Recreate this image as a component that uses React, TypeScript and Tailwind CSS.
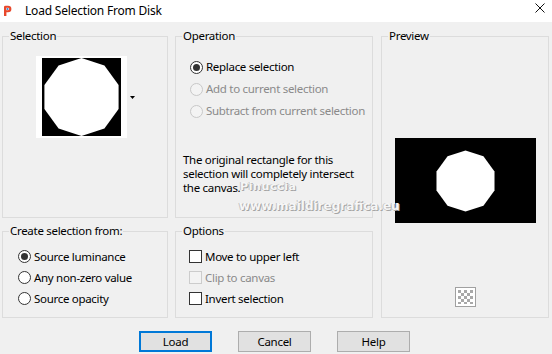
import React from "react";

function Decagon({ cx, cy, r }: { cx: number; cy: number; r: number }) {
  const pts: string[] = [];
  for (let i = 0; i < 10; i++) {
    const a = (Math.PI * 2 * i) / 10;
    pts.push(`${(cx + r * Math.sin(a)).toFixed(2)},${(cy - r * Math.cos(a)).toFixed(2)}`);
  }
  return <polygon points={pts.join(" ")} fill="#fff" />;
}

function Radio({ checked, disabled, label }: { checked?: boolean; disabled?: boolean; label: string }) {
  return (
    <div className="flex items-center gap-[3px]">
      <span
        className={
          disabled
            ? "w-[13px] h-[13px] rounded-full border border-[#c8c8c8] bg-[#f3f3f3] flex items-center justify-center"
            : "w-[13px] h-[13px] rounded-full border border-[#333] bg-white flex items-center justify-center"
        }
      >
        {checked && <span className="w-[7px] h-[7px] rounded-full bg-[#333]" />}
      </span>
      <span className={disabled ? "text-[#8a8a8a]" : "text-black"}>{label}</span>
    </div>
  );
}

function Check({ disabled, label }: { disabled?: boolean; label: string }) {
  return (
    <div className="flex items-center gap-[3px]">
      <span
        className={
          disabled
            ? "w-[13px] h-[13px] border border-[#cccccc] bg-[#f3f3f3]"
            : "w-[13px] h-[13px] border border-[#333] bg-white"
        }
      />
      <span className={disabled ? "text-[#8a8a8a]" : "text-black"}>{label}</span>
    </div>
  );
}

function Group({ title, className, children }: { title: string; className: string; children?: React.ReactNode }) {
  return (
    <fieldset className={"border border-[#dcdcdc] " + className}>
      <legend className="ml-[6px] px-[1px] leading-[14px]">{title}</legend>
      {children}
    </fieldset>
  );
}

function Button({ label, focused }: { label: string; focused?: boolean }) {
  return (
    <div
      className={
        focused
          ? "w-[73px] h-[21px] bg-[#e1e1e1] border-2 border-[#0078d7] flex items-center justify-center"
          : "w-[73px] h-[21px] bg-[#e1e1e1] border border-[#adadad] flex items-center justify-center"
      }
    >
      {label}
    </div>
  );
}

export default function App() {
  return (
    <div className="w-[552px] h-[354px] bg-[#f0f0f0] font-['Noto_Sans',sans-serif] text-[11.5px] tracking-[-0.3px] leading-[14px] text-black relative overflow-hidden">
      {/* title bar */}
      <div className="h-[22px] bg-white flex items-center relative">
        <svg className="ml-[3px]" width="9" height="12" viewBox="0 0 9 12">
          <path d="M1 11 L1 2 Q1 0.8 2.5 0.8 L5 0.8 Q8.4 0.8 8.4 4 Q8.4 7.2 5 7.2 L3.4 7.2 L3.4 11 Z" fill="#e8482c" />
          <path d="M3.4 2.8 L4.8 2.8 Q6.2 2.8 6.2 4 Q6.2 5.2 4.8 5.2 L3.4 5.2 Z" fill="#fff" />
          <circle cx="4.6" cy="4" r="1" fill="#2a8ad8" />
        </svg>
        <span className="ml-[13px] text-[12px] tracking-[-0.2px] text-black">Load Selection From Disk</span>
        <svg className="absolute left-[535px] top-[3px]" width="10" height="10" viewBox="0 0 10 10">
          <path d="M0.5 0.5 L9.5 9.5 M9.5 0.5 L0.5 9.5" stroke="#111" strokeWidth="1" />
        </svg>
      </div>

      {/* body */}
      <div className="flex pl-[2px] pt-[7px]">
        <div className="w-[166px] flex flex-col">
          <Group title="Selection" className="h-[189px]">
            <div className="flex items-center mt-[13px] ml-[33px]">
              <div className="w-[91px] h-[82px] bg-white flex items-center justify-center">
                <svg width="79" height="78" viewBox="0 0 79 78">
                  <rect width="79" height="78" fill="#000" />
                  <Decagon cx={39.5} cy={39} r={39} />
                </svg>
              </div>
              <svg className="ml-[3px]" width="5" height="3" viewBox="0 0 5 3">
                <path d="M0 0 L5 0 L2.5 3 Z" fill="#000" />
              </svg>
            </div>
          </Group>
          <Group title="Create selection from:" className="h-[94px] mt-[6px]">
            <div className="flex flex-col mt-[8px] pl-[15px]">
              <div className="h-[21px] flex items-center"><Radio checked label="Source luminance" /></div>
              <div className="h-[21px] flex items-center"><Radio label="Any non-zero value" /></div>
              <div className="h-[21px] flex items-center"><Radio label="Source opacity" /></div>
            </div>
          </Group>
        </div>

        <div className="w-[198px] ml-[7px] flex flex-col">
          <Group title="Operation" className="h-[189px]">
            <div className="flex flex-col mt-[13px] pl-[14px]">
              <div className="h-[22px] flex items-center"><Radio checked label="Replace selection" /></div>
              <div className="h-[22px] flex items-center"><Radio disabled label="Add to current selection" /></div>
              <div className="h-[22px] flex items-center"><Radio disabled label="Subtract from current selection" /></div>
            </div>
            <p className="mt-[31px] pl-[7px] pr-[8px] leading-[14px]">
              The original rectangle for this selection will completely intersect the canvas.
            </p>
          </Group>
          <Group title="Options" className="h-[94px] mt-[6px]">
            <div className="flex flex-col mt-[8px] pl-[13px]">
              <div className="h-[21px] flex items-center"><Check label="Move to upper left" /></div>
              <div className="h-[21px] flex items-center"><Check disabled label="Clip to canvas" /></div>
              <div className="h-[21px] flex items-center"><Check label="Invert selection" /></div>
            </div>
          </Group>
        </div>

        <div className="w-[168px] ml-[8px]">
          <Group title="Preview" className="h-[289px]">
            <div className="flex flex-col items-center">
              <svg className="mt-[95px]" width="141" height="85" viewBox="0 0 141 85">
                <rect width="141" height="85" fill="#000" />
                <Decagon cx={70.5} cy={43} r={30.5} />
              </svg>
              <div className="mt-[64px] w-[21px] h-[20px] border border-[#a0a0a0] bg-white flex items-center justify-center">
                <svg width="15" height="14" viewBox="0 0 15 14">
                  {[0, 1, 2, 3, 4].map((r) =>
                    [0, 1, 2, 3, 4].map((c) =>
                      (r + c) % 2 === 0 ? (
                        <rect key={`${r}-${c}`} x={c * 3} y={r * 3} width="3" height="3" fill="#a8a8a8" />
                      ) : null
                    )
                  )}
                </svg>
              </div>
            </div>
          </Group>
        </div>
      </div>

      {/* buttons */}
      <div className="flex gap-[26px] pl-[139px] mt-[13px]">
        <Button label="Load" focused />
        <Button label="Cancel" />
        <Button label="Help" />
      </div>

      {/* watermark */}
      <div className="absolute left-[240px] top-[180px] font-['DejaVu_Sans',sans-serif] font-bold text-[11px] tracking-[0.6px] text-[#f6f6f6] [text-shadow:1px_1px_0_#a5a5a5,-1px_0_0_#c4c4c4]">
        Pinuccia
      </div>
      <div className="absolute left-[239px] top-[199px] font-['DejaVu_Sans',sans-serif] font-bold text-[12px] tracking-[0px] text-[#f6f6f6] [text-shadow:1px_1px_0_#a5a5a5,-1px_0_0_#c4c4c4]">
        www.maildiregrafica.eu
      </div>
    </div>
  );
}
